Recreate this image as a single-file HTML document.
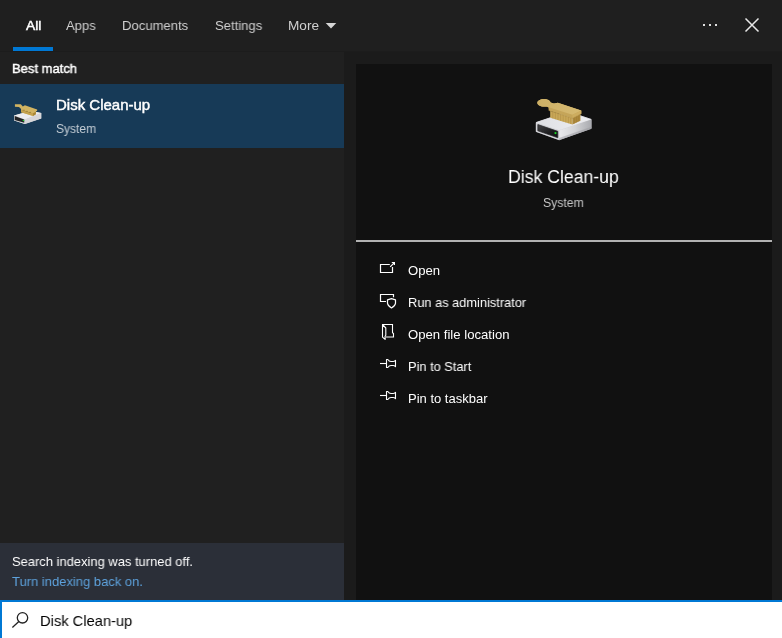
<!DOCTYPE html>
<html><head><meta charset="utf-8"><title>Search</title>
<style>
html,body{margin:0;padding:0;}
body{width:782px;height:638px;overflow:hidden;background:#1b1b1b;font-family:"Liberation Sans",sans-serif;position:relative;}
.abs{position:absolute;}
.t{will-change:transform;position:absolute;white-space:nowrap;transform-origin:0 0;line-height:1;}
#header{left:0;top:0;width:782px;height:51px;background:#1f1f1f;}
#left{left:0;top:51px;width:344px;height:549px;background:#202020;}
#sel{left:0;top:84px;width:344px;height:64px;background:#173a57;}
#right{left:356px;top:64px;width:416px;height:536px;background:#111111;}
#divider{left:356px;top:240px;width:416px;height:2px;background:#b2b2b2;}
#msg{left:0;top:543px;width:344px;height:57px;background:#2b2f38;}
#search{left:0;top:600px;width:782px;height:38px;background:#fff;box-sizing:border-box;border-top:2px solid #0078d4;border-left:2px solid #0078d4;}
#tabbar{left:13px;top:47px;width:40px;height:4px;background:#0078d4;}
</style></head><body>
<div class="abs" id="header"></div>
<div class="abs" id="left"></div>
<div class="abs" id="sel"></div>
<div class="abs" id="right"></div>
<div class="abs" id="divider"></div>
<div class="abs" id="msg"></div>
<div class="abs" id="search"></div>
<div class="abs" style="left:0;top:51px;width:782px;height:1px;background:#1c1c1c"></div>
<div class="abs" id="tabbar"></div>

<span class="t" id="t_all" style="left:25.6px;top:19px;font-size:13.3px;color:#fff;-webkit-text-stroke:0.45px #fff;transform:scaleX(1.04);">All</span>
<span class="t" id="t_apps" style="left:66.4px;top:19px;font-size:13.3px;color:#d0d0d0;transform:scaleX(.98);">Apps</span>
<span class="t" id="t_docs" style="left:122.3px;top:19px;font-size:13.3px;color:#d0d0d0;transform:scaleX(.985);">Documents</span>
<span class="t" id="t_set" style="left:215.2px;top:19px;font-size:13.3px;color:#d0d0d0;transform:scaleX(.983);">Settings</span>
<span class="t" id="t_more" style="left:288px;top:19px;font-size:13.3px;color:#d0d0d0;transform:scaleX(1.025);">More</span>
<span class="t" id="t_best" style="left:12.4px;top:61.6px;font-size:13.3px;color:#fff;-webkit-text-stroke:0.45px #fff;transform:scaleX(.977);">Best match</span>
<span class="t" id="t_item" style="left:55.7px;top:97.3px;font-size:15px;color:#fff;-webkit-text-stroke:0.45px #fff;transform:scaleX(.995);">Disk Clean-up</span>
<span class="t" id="t_itemsub" style="left:56.4px;top:122.5px;font-size:12.5px;color:#c5ced6;transform:scaleX(.963);">System</span>
<span class="t" id="t_title" style="left:508.2px;top:168px;font-size:18px;color:#fff;transform:scaleX(.98);">Disk Clean-up</span>
<span class="t" id="t_sub" style="left:543.1px;top:196.8px;font-size:12.5px;color:#c8c8c8;transform:scaleX(.98);">System</span>
<span class="t" id="t_a1" style="left:408.2px;top:264px;font-size:13px;color:#fff;transform:scaleX(1.01);">Open</span>
<span class="t" id="t_a2" style="left:408px;top:296px;font-size:13px;color:#fff;transform:scaleX(.985);">Run as administrator</span>
<span class="t" id="t_a3" style="left:408.2px;top:328px;font-size:13px;color:#fff;transform:scaleX(1.011);">Open file location</span>
<span class="t" id="t_a4" style="left:408.4px;top:360px;font-size:13px;color:#fff;transform:scaleX(.985);">Pin to Start</span>
<span class="t" id="t_a5" style="left:408.4px;top:392px;font-size:13px;color:#fff;transform:scaleX(.998);">Pin to taskbar</span>
<span class="t" id="t_m1" style="left:11.5px;top:554.7px;font-size:13.3px;color:#fff;transform:scaleX(.973);">Search indexing was turned off.</span>
<span class="t" id="t_m2" style="left:11.5px;top:575.1px;font-size:13.3px;color:#5ea3de;transform:scaleX(.977);">Turn indexing back on.</span>
<span class="t" id="t_q" style="left:39.5px;top:613px;font-size:15px;color:#000;transform:scaleX(.98);">Disk Clean-up</span>

<!-- header icons -->
<svg class="abs" style="left:325px;top:22px" width="12" height="8" viewBox="0 0 12 8"><polygon points="0.7,1 11.3,1 6,6.5" fill="#d6d6d6"/></svg>
<svg class="abs" style="left:700px;top:20px" width="22" height="10" viewBox="0 0 22 10"><rect x="3" y="4" width="2" height="2" fill="#e0e0e0"/><rect x="9" y="4" width="2" height="2" fill="#e0e0e0"/><rect x="15" y="4" width="2" height="2" fill="#e0e0e0"/></svg>
<svg class="abs" style="left:742px;top:15px" width="20" height="20" viewBox="0 0 20 20"><path d="M3.5 3.5 L16.5 16.5 M16.5 3.5 L3.5 16.5" stroke="#e8e8e8" stroke-width="1.5" fill="none"/></svg>
<!-- search icon -->
<svg class="abs" style="left:8px;top:608px" width="24" height="24" viewBox="0 0 24 24"><circle cx="14.5" cy="9.8" r="5.2" stroke="#222" stroke-width="1.3" fill="none"/><path d="M10.8 13.6 L4.4 19.4" stroke="#222" stroke-width="1.3" fill="none"/></svg>
<!-- action icons -->
<svg class="abs" style="left:374px;top:256px" width="30" height="28" viewBox="0 0 30 28"><path d="M15.8 8.5 H6.5 V16.5 H18.5 V11" stroke="#fff" stroke-width="1.2" fill="none"/><path d="M16.2 10.8 L20.3 6.6 M17.8 6.5 H20.4 V9.1" stroke="#fff" stroke-width="1.2" fill="none"/></svg>
<svg class="abs" style="left:374px;top:288px" width="30" height="28" viewBox="0 0 30 28"><path d="M12 13.5 H6.5 V6.5 H19.5 V9.2" stroke="#fff" stroke-width="1.2" fill="none"/><path d="M17.5 10.7 L21.5 11.8 V15.3 C21.4 17 19.6 18.7 17.5 19.9 C15.4 18.7 13.6 17 13.5 15.3 V11.8 Z" stroke="#fff" stroke-width="1.2" fill="none" stroke-linejoin="round"/></svg>
<svg class="abs" style="left:374px;top:320px" width="30" height="28" viewBox="0 0 30 28"><path d="M8.5 4.5 H18.5 V12.8 L19.5 13.6 V17 H11.8" stroke="#fff" stroke-width="1.1" fill="none"/><path d="M8.5 4.5 V17.2 L11.1 19.4 V16.2 L11.8 15.2 V8 Z" stroke="#fff" stroke-width="1.1" fill="none" stroke-linejoin="round"/></svg>
<svg class="abs" style="left:374px;top:352px" width="30" height="28" viewBox="0 0 30 28"><path d="M6 11.5 H12" stroke="#fff" stroke-width="1.1" fill="none"/><path d="M12.5 7.5 H13.8 C14.6 8.8 15.6 9.5 17 9.5 H19.2 C20.2 9.5 20.8 9 21.5 8.3 V14.7 C20.8 14 20.2 13.5 19.2 13.5 H17 C15.6 13.5 14.6 14.2 13.8 15.5 H12.5 Z" stroke="#fff" stroke-width="1.1" fill="none" stroke-linejoin="round"/></svg>
<svg class="abs" style="left:374px;top:384px" width="30" height="28" viewBox="0 0 30 28"><path d="M6 11.5 H12" stroke="#fff" stroke-width="1.1" fill="none"/><path d="M12.5 7.5 H13.8 C14.6 8.8 15.6 9.5 17 9.5 H19.2 C20.2 9.5 20.8 9 21.5 8.3 V14.7 C20.8 14 20.2 13.5 19.2 13.5 H17 C15.6 13.5 14.6 14.2 13.8 15.5 H12.5 Z" stroke="#fff" stroke-width="1.1" fill="none" stroke-linejoin="round"/></svg>

<!-- big app icon -->
<svg class="abs" style="left:530px;top:92px" width="68" height="54" viewBox="0 0 782 621">
<defs>
<linearGradient id="gR" x1="0" y1="0" x2="1" y2="0"><stop offset="0" stop-color="#e9e9ec"/><stop offset="0.5" stop-color="#d2d3d6"/><stop offset="1" stop-color="#a9aaaf"/></linearGradient>
<linearGradient id="gT" x1="0" y1="0" x2="1" y2="0"><stop offset="0" stop-color="#dfe0e5"/><stop offset="1" stop-color="#ededf0"/></linearGradient>
<linearGradient id="gB" x1="0" y1="0" x2="1" y2="1"><stop offset="0" stop-color="#444447"/><stop offset="0.6" stop-color="#1c1c1e"/><stop offset="1" stop-color="#111113"/></linearGradient>
<linearGradient id="gW" x1="0" y1="0" x2="1" y2="0"><stop offset="0" stop-color="#cdb066"/><stop offset="1" stop-color="#d6ba72"/></linearGradient>
</defs>
<path d="M72 352 L440 228 L703 316 L703 420 L335 550 L72 455 Z" fill="#bfc0c5" stroke="#bfc0c5" stroke-width="8" stroke-linejoin="round"/>
<path d="M72 350 L440 228 L703 315 L335 440 Z" fill="url(#gT)" stroke="#e3e4e8" stroke-width="8" stroke-linejoin="round"/>
<path d="M335 442 L706 317 L706 420 L335 552 Z" fill="url(#gR)"/>
<path d="M68 352 L335 442 L335 552 L68 456 Z" fill="#d4d5d9"/>
<path d="M335 530 L706 400 L706 422 L335 554 Z" fill="#9a9ba0" opacity="0.55"/>
<path d="M90 374 L320 452 L320 526 L90 446 Z" fill="url(#gB)" stroke="#262628" stroke-width="8" stroke-linejoin="round"/>
<circle cx="293" cy="472" r="13" fill="#19d226"/>
<!-- brush -->
<path d="M232 215 L488 298 L488 375 L232 295 Z" fill="#c9a858"/>
<path d="M488 298 L580 252 L580 330 L488 375 Z" fill="#ad893d"/>
<path d="M262 228 V303 M292 238 V312 M322 248 V322 M352 258 V331 M382 268 V340 M412 278 V350 M442 288 V359 M468 296 V367" stroke="#b28f45" stroke-width="7"/>
<path d="M510 290 V362 M535 277 V350 M560 265 V338" stroke="#9e7b33" stroke-width="6"/>
<path d="M160 80 C205 80 236 100 236 122 L275 131 L320 125 L590 212 L590 250 L488 302 L215 214 L212 178 C200 166 185 171 160 171 C118 171 84 150 84 125 C84 100 118 80 160 80 Z" fill="#c5a559"/>
<path d="M160 80 C205 80 236 100 236 122 L275 131 L320 125 L590 212 L488 262 L215 176 C205 162 185 167 160 167 C118 167 84 148 84 124 C84 100 118 80 160 80 Z" fill="url(#gW)"/>
<path d="M488 262 L590 212 L590 250 L488 302 Z" fill="#cdad60"/>
<path d="M215 214 L488 302 L590 250" stroke="#9f7f38" stroke-width="5" fill="none" opacity="0.7"/>
</svg>
<!-- small app icon -->
<svg class="abs" style="left:8px;top:98px" width="40" height="32" viewBox="0 0 782 626">
<path d="M120 340 L440 250 L650 295 L650 400 L330 510 L120 440 Z" fill="#cfd0d4"/>
<path d="M120 340 L440 250 L650 295 L330 420 Z" fill="#ececef"/>
<path d="M330 420 L650 295 L650 400 L330 510 Z" fill="#d6d6d9"/>
<path d="M120 340 L330 420 L330 510 L120 440 Z" fill="#dcdde0"/>
<path d="M130 352 L318 420 L318 484 L130 428 Z" fill="#222224"/>
<circle cx="302" cy="440" r="16" fill="#22d030"/>
<path d="M135 120 L250 120 L290 165 L330 140 L570 225 L570 250 L545 265 L545 320 L490 350 L255 280 L255 215 L215 175 L135 170 Z" fill="#d2b462"/>
<path d="M255 230 L490 300 L490 350 L255 280 Z" fill="#c4a24e"/>
<path d="M490 300 L545 270 L545 320 L490 350 Z" fill="#a88535"/>
<path d="M285 240 H330 M345 262 H390 M405 282 H450" stroke="#8a6c2a" stroke-width="12"/>
</svg>
</body></html>
